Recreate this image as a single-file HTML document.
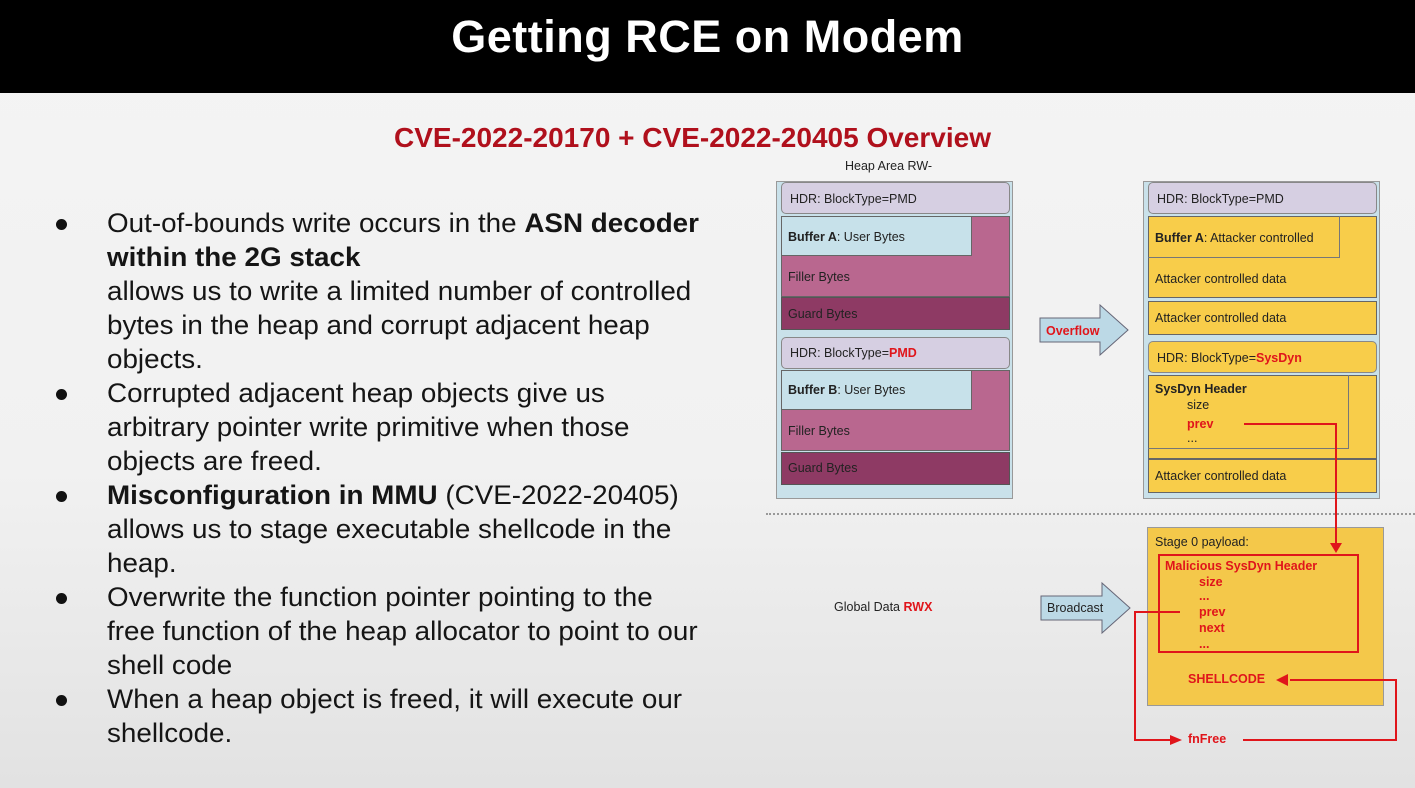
<!DOCTYPE html>
<html><head><meta charset="utf-8"><style>
*{margin:0;padding:0;box-sizing:border-box}
body{width:1415px;height:788px;overflow:hidden;position:relative;font-family:"Liberation Sans",Arial,sans-serif;background:linear-gradient(#f4f4f4 0%,#f1f1f1 60%,#e2e2e2 100%)}
.bar{position:absolute;left:0;top:0;width:1415px;height:93px;background:#000}
.title{position:absolute;left:0;width:1415px;top:11px;text-align:center;color:#fff;font-weight:bold;font-size:45px;letter-spacing:0.5px}
.sub{position:absolute;left:0;width:1385px;top:122px;text-align:center;color:#b0101c;font-weight:bold;font-size:28px}
.l{position:absolute;left:107px;font-size:27px;color:#151515;white-space:nowrap;transform:scaleX(1.03);transform-origin:left}
.b{position:absolute;left:56px;width:11px;height:11px;border-radius:50%;background:#111}
.a{position:absolute;font-size:12.5px;color:#222;white-space:nowrap}
.box{position:absolute}
.r{color:#e0151b;font-weight:bold}
</style></head><body>
<div class="bar"></div>
<div class="title">Getting RCE on Modem</div>
<div class="sub">CVE-2022-20170 + CVE-2022-20405 Overview</div>

<div class="b" style="top:219px"></div>
<div class="l" style="top:208px">Out-of-bounds write occurs in the <b>ASN decoder</b></div>
<div class="l" style="top:242px"><b>within the 2G stack</b></div>
<div class="l" style="top:276px">allows us to write a limited number of controlled</div>
<div class="l" style="top:310px">bytes in the heap and corrupt adjacent heap</div>
<div class="l" style="top:344px">objects.</div>
<div class="b" style="top:389px"></div>
<div class="l" style="top:378px">Corrupted adjacent heap objects give us</div>
<div class="l" style="top:412px">arbitrary pointer write primitive when those</div>
<div class="l" style="top:446px">objects are freed.</div>
<div class="b" style="top:491px"></div>
<div class="l" style="top:480px"><b>Misconfiguration in MMU</b> (CVE-2022-20405)</div>
<div class="l" style="top:514px">allows us to stage executable shellcode in the</div>
<div class="l" style="top:548px">heap.</div>
<div class="b" style="top:593px"></div>
<div class="l" style="top:582px">Overwrite the function pointer pointing to the</div>
<div class="l" style="top:616px">free function of the heap allocator to point to our</div>
<div class="l" style="top:650px">shell code</div>
<div class="b" style="top:695px"></div>
<div class="l" style="top:684px">When a heap object is freed, it will execute our</div>
<div class="l" style="top:718px">shellcode.</div>

<div class="a" style="left:845px;top:159px">Heap Area RW-</div>

<!-- left box -->
<div class="box" style="left:776px;top:181px;width:237px;height:318px;background:#c9e1ea;border:1px solid #999"></div>
<div class="box" style="left:781px;top:182px;width:229px;height:32px;background:#d6cfe2;border:1px solid #888;border-radius:5px"></div>
<div class="a" style="left:790px;top:192px">HDR: BlockType=PMD</div>
<div class="box" style="left:781px;top:216px;width:229px;height:81px;background:#b9678f;border:1px solid #666"></div>
<div class="box" style="left:781px;top:216px;width:191px;height:40px;background:#c7e1ea;border:1px solid #666"></div>
<div class="a" style="left:788px;top:230px"><b>Buffer A</b>: User Bytes</div>
<div class="a" style="left:788px;top:270px">Filler Bytes</div>
<div class="box" style="left:781px;top:297px;width:229px;height:33px;background:#8e3a64;border:1px solid #555"></div>
<div class="a" style="left:788px;top:307px">Guard Bytes</div>
<div class="box" style="left:781px;top:337px;width:229px;height:32px;background:#d6cfe2;border:1px solid #888;border-radius:5px"></div>
<div class="a" style="left:790px;top:346px">HDR: BlockType=<span class="r">PMD</span></div>
<div class="box" style="left:781px;top:370px;width:229px;height:81px;background:#b9678f;border:1px solid #666"></div>
<div class="box" style="left:781px;top:370px;width:191px;height:40px;background:#c7e1ea;border:1px solid #666"></div>
<div class="a" style="left:788px;top:383px"><b>Buffer B</b>: User Bytes</div>
<div class="a" style="left:788px;top:424px">Filler Bytes</div>
<div class="box" style="left:781px;top:452px;width:229px;height:33px;background:#8e3a64;border:1px solid #555"></div>
<div class="a" style="left:788px;top:461px">Guard Bytes</div>

<!-- right box -->
<div class="box" style="left:1143px;top:181px;width:237px;height:318px;background:#c9e1ea;border:1px solid #999"></div>
<div class="box" style="left:1148px;top:182px;width:229px;height:32px;background:#d6cfe2;border:1px solid #888;border-radius:5px"></div>
<div class="a" style="left:1157px;top:192px">HDR: BlockType=PMD</div>
<div class="box" style="left:1148px;top:216px;width:229px;height:82px;background:#f8cd4a;border:1px solid #666"></div>
<div class="box" style="left:1148px;top:216px;width:192px;height:42px;border:1px solid #777;border-top:none;border-left:none"></div>
<div class="a" style="left:1155px;top:231px"><b>Buffer A</b>: Attacker controlled</div>
<div class="a" style="left:1155px;top:272px">Attacker controlled data</div>
<div class="box" style="left:1148px;top:301px;width:229px;height:34px;background:#f8cd4a;border:1px solid #666"></div>
<div class="a" style="left:1155px;top:311px">Attacker controlled data</div>
<div class="box" style="left:1148px;top:341px;width:229px;height:32px;background:#f8cd4a;border:1px solid #888;border-radius:5px"></div>
<div class="a" style="left:1157px;top:351px">HDR: BlockType=<span class="r">SysDyn</span></div>
<div class="box" style="left:1148px;top:375px;width:229px;height:84px;background:#f8cd4a;border:1px solid #666"></div>
<div class="box" style="left:1148px;top:375px;width:201px;height:74px;border:1px solid #777;border-top:none;border-left:none"></div>
<div class="a" style="left:1155px;top:382px"><b>SysDyn Header</b></div>
<div class="a" style="left:1187px;top:398px">size</div>
<div class="a r" style="left:1187px;top:417px">prev</div>
<div class="a" style="left:1187px;top:431px">...</div>
<div class="box" style="left:1148px;top:459px;width:229px;height:34px;background:#f8cd4a;border:1px solid #666"></div>
<div class="a" style="left:1155px;top:469px">Attacker controlled data</div>

<!-- dotted -->
<div class="box" style="left:766px;top:513px;width:649px;border-top:2px dotted #999"></div>

<!-- stage 0 -->
<div class="box" style="left:1147px;top:527px;width:237px;height:179px;background:#f4c84a;border:1px solid #999"></div>
<div class="a" style="left:1155px;top:535px">Stage 0 payload:</div>
<div class="box" style="left:1158px;top:554px;width:201px;height:99px;border:2px solid #e0151b"></div>
<div class="a r" style="left:1165px;top:559px">Malicious SysDyn Header</div>
<div class="a r" style="left:1199px;top:575px">size</div>
<div class="a r" style="left:1199px;top:589px">...</div>
<div class="a r" style="left:1199px;top:605px">prev</div>
<div class="a r" style="left:1199px;top:621px">next</div>
<div class="a r" style="left:1199px;top:637px">...</div>
<div class="a r" style="left:1188px;top:672px">SHELLCODE</div>
<div class="a r" style="left:1188px;top:732px;font-weight:bold">fnFree</div>

<div class="a" style="left:834px;top:600px">Global Data <span class="r">RWX</span></div>

<svg class="box" style="left:0;top:0" width="1415" height="788">
 <path d="M1040 318 H1100 V305 L1128 330 L1100 355 V342 H1040 Z" fill="#bcd9e6" stroke="#667" stroke-width="1"/>
 <text x="1046" y="335" font-family="Liberation Sans" font-size="12.5" font-weight="bold" fill="#e0151b">Overflow</text>
 <path d="M1041 596 H1102 V583 L1130 608 L1102 633 V620 H1041 Z" fill="#bcd9e6" stroke="#667" stroke-width="1"/>
 <text x="1047" y="612" font-family="Liberation Sans" font-size="12.5" fill="#222">Broadcast</text>
 <g stroke="#e0151b" stroke-width="2" fill="none">
  <path d="M1244 424 H1336 V545"/>
  <path d="M1180 612 H1135 V740 H1172"/>
  <path d="M1243 740 H1396 V680 H1290"/>
 </g>
 <g fill="#e0151b">
  <path d="M1330 543 L1342 543 L1336 553 Z"/>
  <path d="M1170 735 L1182 740 L1170 745 Z"/>
  <path d="M1288 674 L1276 680 L1288 686 Z"/>
 </g>
</svg>
</body></html>
